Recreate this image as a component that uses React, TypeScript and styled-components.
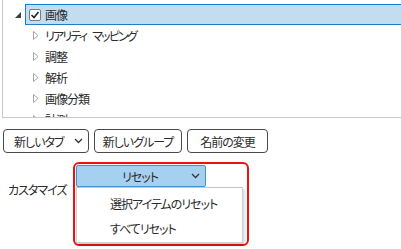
import styled, { createGlobalStyle } from "styled-components";

const GlobalStyle = createGlobalStyle`
  html, body {
    margin: 0;
    padding: 0;
    background: #ffffff;
  }
  body {
    font-family: "Noto Sans CJK JP", "Noto Sans", sans-serif;
    font-size: 12px;
    color: #2b2b2b;
    font-feature-settings: "palt" 1;
    letter-spacing: -1px;
  }
`;

const Page = styled.div`
  width: 401px;
  height: 249px;
  overflow: hidden;
  background: #ffffff;
`;

const TreePanel = styled.div`
  margin-left: 2px;
  height: 118px;
  border-left: 1px solid #c9c9c9;
  border-bottom: 1px solid #c9c9c9;
  padding-top: 4px;
  box-sizing: border-box;
  overflow: hidden;
`;

const Row = styled.div<{ $indent: number }>`
  display: flex;
  align-items: center;
  height: 21px;
  padding-left: ${(p) => p.$indent}px;
  line-height: 16px;
  white-space: nowrap;
`;

const Expander = styled.span<{ $width: number }>`
  display: flex;
  align-items: center;
  width: ${(p) => p.$width}px;
  height: 21px;
`;

const SelectedItem = styled.div`
  flex: 1;
  display: flex;
  align-items: center;
  gap: 4px;
  height: 21px;
  box-sizing: border-box;
  padding-left: 3px;
  background: #c4dcef;
  border: 1px solid #1a7fd1;
  border-right: none;
`;

const CheckBox = styled.span`
  display: flex;
  align-items: center;
  justify-content: center;
  width: 12px;
  height: 12px;
  box-sizing: border-box;
  border: 1px solid #7a7a7a;
  border-radius: 2px;
  background: #ffffff;
`;

const Label = styled.span<{ $tight?: boolean }>`
  color: #2b2b2b;
  letter-spacing: ${(p) => (p.$tight ? "-1.8px" : "-1px")};
  word-spacing: 5px;
`;

const ButtonRow = styled.div`
  display: flex;
  gap: 5px;
  margin: 11px 0 0 3px;
`;

const Button = styled.button<{ $menu?: boolean; $width: number }>`
  display: flex;
  align-items: center;
  justify-content: ${(p) => (p.$menu ? "space-between" : "center")};
  width: ${(p) => p.$width}px;
  height: 24px;
  padding: ${(p) => (p.$menu ? "0 5px 0 10px" : "0")};
  box-sizing: border-box;
  border: 1px solid #4a4a4a;
  border-radius: 4px;
  background: #ffffff;
  font-family: inherit;
  font-size: 12px;
  letter-spacing: -1px;
  white-space: nowrap;
  color: #2b2b2b;
  font-feature-settings: "palt" 1;
`;

const CustomizeRow = styled.div`
  display: flex;
  margin-top: 9px;
`;

const CustomizeLabel = styled.div`
  width: 65px;
  padding-left: 8px;
  margin-top: 20px;
  line-height: 16px;
  white-space: nowrap;
  color: #2b2b2b;
`;

const Highlight = styled.div`
  width: 176px;
  height: 84px;
  box-sizing: border-box;
  border: 2px solid #f01010;
  border-radius: 6px;
  padding: 1px;
`;

const Combo = styled.div`
  display: flex;
  align-items: center;
  width: 130px;
  height: 22px;
  box-sizing: border-box;
  border: 1px solid #3f93dc;
  border-radius: 2px;
  background: #a6d0ef;
  position: relative;
  z-index: 1;
`;

const ComboText = styled.span`
  flex: 1;
  text-align: center;
  padding-left: 12px;
  color: #2b2b2b;
`;

const ComboChevron = styled.span`
  display: flex;
  width: 13px;
  padding-right: 1px;
`;

const Menu = styled.div`
  width: 167px;
  height: 56px;
  box-sizing: border-box;
  border: 1px solid #cfcfcf;
  border-top-color: #c6c6c6;
  background: #ffffff;
  box-shadow: 1px 2px 3px rgba(0, 0, 0, 0.22);
  padding-top: 8px;
`;

const MenuItem = styled.div`
  height: 25px;
  line-height: 16px;
  padding-left: 33px;
  white-space: nowrap;
  color: #2b2b2b;
`;

const Chevron = () => (
  <svg width="9" height="6" viewBox="0 0 9 6">
    <polyline points="1,1 4.5,4.5 8,1" fill="none" stroke="#333" strokeWidth="1.3" />
  </svg>
);

const treeChildren = ["リアリティ マッピング", "調整", "解析", "画像分類", "計測"];

const App = () => {
  return (
    <Page>
      <GlobalStyle />
      <TreePanel>
        <Row $indent={12}>
          <Expander $width={10}>
            <svg width="6" height="6" viewBox="0 0 6 6">
              <polygon points="6,0 6,6 0,6" fill="#404040" />
            </svg>
          </Expander>
          <SelectedItem>
            <CheckBox>
              <svg width="10" height="10" viewBox="0 0 10 10">
                <polyline points="1.5,5 4,7.5 8.5,2" fill="none" stroke="#222" strokeWidth="1.6" />
              </svg>
            </CheckBox>
            <Label>画像</Label>
          </SelectedItem>
        </Row>
        {treeChildren.map((name) => (
          <Row $indent={30} key={name}>
            <Expander $width={12}>
              <svg width="6" height="9" viewBox="0 0 6 9">
                <polygon points="0.5,0.5 5,4.5 0.5,8.5" fill="none" stroke="#a6a6a6" strokeWidth="1" />
              </svg>
            </Expander>
            <Label $tight={name.length > 4}>{name}</Label>
          </Row>
        ))}
      </TreePanel>
      <ButtonRow>
        <Button $menu $width={86}>
          新しいタブ
          <Chevron />
        </Button>
        <Button $width={88}>新しいグループ</Button>
        <Button $width={81}>名前の変更</Button>
      </ButtonRow>
      <CustomizeRow>
        <CustomizeLabel>カスタマイズ</CustomizeLabel>
        <Highlight>
          <Combo>
            <ComboText>リセット</ComboText>
            <ComboChevron>
              <Chevron />
            </ComboChevron>
          </Combo>
          <Menu>
            <MenuItem>選択アイテムのリセット</MenuItem>
            <MenuItem>すべてリセット</MenuItem>
          </Menu>
        </Highlight>
      </CustomizeRow>
    </Page>
  );
};

export default App;
